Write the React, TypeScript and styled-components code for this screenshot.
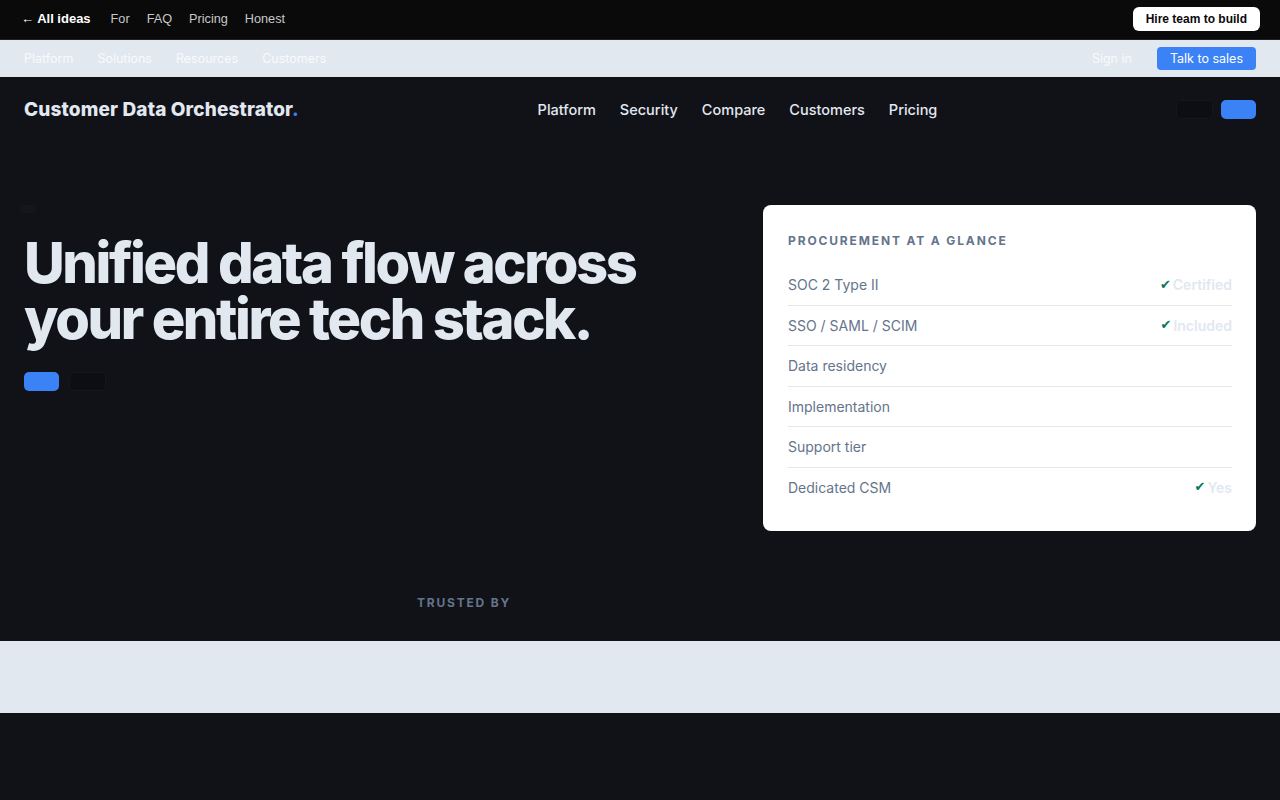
import styled, { createGlobalStyle } from 'styled-components';

const GlobalStyle = createGlobalStyle`
    html, body {
        margin: 0;
        padding: 0;
        background: #111218;
    }
    * {
        box-sizing: border-box;
    }
`;

const procurement = [
    { label: 'SOC 2 Type II', value: 'Certified' },
    { label: 'SSO / SAML / SCIM', value: 'Included' },
    { label: 'Data residency', value: '' },
    { label: 'Implementation', value: '' },
    { label: 'Support tier', value: '' },
    { label: 'Dedicated CSM', value: 'Yes' },
];

const App = () => {
    return (
        <Page>
            <GlobalStyle />
            <TopBar>
                <TopLeft>
                    <BackLink>← All ideas</BackLink>
                    <TopLinks>
                        <span>For</span>
                        <span>FAQ</span>
                        <span>Pricing</span>
                        <span>Honest</span>
                    </TopLinks>
                </TopLeft>
                <HireButton>Hire team to build</HireButton>
            </TopBar>

            <SubBar>
                <SubLinks>
                    <span>Platform</span>
                    <span>Solutions</span>
                    <span>Resources</span>
                    <span>Customers</span>
                </SubLinks>
                <SubRight>
                    <span>Sign in</span>
                    <SalesButton>Talk to sales</SalesButton>
                </SubRight>
            </SubBar>

            <Header>
                <Logo>
                    Customer Data Orchestrator<Dot>.</Dot>
                </Logo>
                <Nav>
                    <a>Platform</a>
                    <a>Security</a>
                    <a>Compare</a>
                    <a>Customers</a>
                    <a>Pricing</a>
                </Nav>
                <HeaderActions>
                    <GhostButton />
                    <PrimaryButton />
                </HeaderActions>
            </Header>

            <Hero>
                <HeroLeft>
                    <Badge />
                    <Headline>
                        Unified data flow across your entire tech stack.
                    </Headline>
                    <HeroActions>
                        <PrimaryButton />
                        <GhostButton />
                    </HeroActions>
                </HeroLeft>
                <Card>
                    <CardTitle>Procurement at a glance</CardTitle>
                    {procurement.map((row) => (
                        <Row key={row.label}>
                            <span>{row.label}</span>
                            {row.value && (
                                <Value>
                                    <Check>✔</Check>
                                    {row.value}
                                </Value>
                            )}
                        </Row>
                    ))}
                </Card>
            </Hero>

            <Trusted>
                <Eyebrow>Trusted by</Eyebrow>
            </Trusted>
            <LogoBand />
        </Page>
    );
};
export default App;

const Page = styled.div`
    min-height: 800px;
    background: #111218;
    font-family: Inter, 'Noto Sans', sans-serif;
`;

const TopBar = styled.div`
    height: 40px;
    background: #0a0a0b;
    border-bottom: 1px solid #1c1f26;
    display: flex;
    align-items: center;
    justify-content: space-between;
    padding: 0 20px 1px 21px;
    font-family: 'Liberation Sans', Arial, sans-serif;
    font-size: 13px;
`;

const TopLeft = styled.div`
    display: flex;
    align-items: center;
    gap: 20px;
`;

const BackLink = styled.span`
    color: #ffffff;
    font-weight: 700;
    position: relative;
    top: -1px;
`;

const TopLinks = styled.div`
    display: flex;
    gap: 17px;
    color: #c8c8c8;
    font-size: 12.7px;
`;

const HireButton = styled.button`
    background: #ffffff;
    color: #0a0a0a;
    border: none;
    border-radius: 6px;
    height: 24px;
    padding: 0 13px;
    font-family: 'Liberation Sans', Arial, sans-serif;
    font-size: 12px;
    font-weight: 700;
`;

const SubBar = styled.div`
    height: 37px;
    background: #e2e8f0;
    display: flex;
    align-items: center;
    justify-content: space-between;
    padding: 0 24px;
    font-size: 12.5px;
    color: #f8fafc;
`;

const SubLinks = styled.div`
    display: flex;
    gap: 24px;
`;

const SubRight = styled.div`
    display: flex;
    align-items: center;
    gap: 25px;
`;

const SalesButton = styled.button`
    background: #3b82f6;
    color: #ffffff;
    border: none;
    border-radius: 4px;
    height: 23px;
    padding: 0 13px;
    font-family: Inter, sans-serif;
    font-size: 12.5px;
`;

const Header = styled.header`
    height: 64px;
    display: flex;
    align-items: center;
    justify-content: space-between;
    padding: 0 24px;
`;

const Logo = styled.div`
    font-size: 19px;
    font-weight: 800;
    color: #e2e8f0;
    letter-spacing: 0.15px;
`;

const Dot = styled.span`
    color: #3b82f6;
`;

const Nav = styled.nav`
    display: flex;
    gap: 24px;
    a {
        font-size: 14.5px;
        font-weight: 500;
        color: #e2e8f0;
    }
`;

const HeaderActions = styled.div`
    display: flex;
    gap: 8px;
`;

const PrimaryButton = styled.button`
    width: 35px;
    height: 19px;
    background: #3b82f6;
    border: none;
    border-radius: 5px;
    padding: 0;
`;

const GhostButton = styled.button`
    width: 37px;
    height: 19px;
    background: #0d0e12;
    border: 1px solid #16171d;
    border-radius: 5px;
    padding: 0;
`;

const Hero = styled.section`
    display: grid;
    grid-template-columns: 1fr 493px;
    gap: 48px;
    padding: 64px 24px 64px 24px;
`;

const HeroLeft = styled.div`
    display: flex;
    flex-direction: column;
    align-items: flex-start;
`;

const Badge = styled.div`
    width: 16px;
    height: 8px;
    margin-left: -4px;
    background: #15161c;
    border-radius: 4px;
    margin-bottom: 22px;
`;

const Headline = styled.h1`
    margin: 0;
    font-size: 56px;
    font-weight: 800;
    line-height: 1;
    letter-spacing: -0.043em;
    color: #e2e8f0;
    max-width: 640px;
`;

const HeroActions = styled.div`
    display: flex;
    gap: 10px;
    margin-top: 25px;
`;

const Card = styled.div`
    background: #ffffff;
    border-radius: 8px;
    padding: 26px 24px 24px 25px;
    align-self: start;
`;

const CardTitle = styled.div`
    font-size: 12px;
    font-weight: 700;
    letter-spacing: 0.155em;
    text-transform: uppercase;
    color: #64748b;
    line-height: 20px;
    margin-bottom: 14.5px;
`;

const Row = styled.div`
    display: flex;
    justify-content: space-between;
    align-items: center;
    padding: 0.6rem 0;
    font-size: 14px;
    line-height: 1.45;
    color: #64748b;
    border-bottom: 1px solid #e2e8f0;
    &:last-child {
        border-bottom: none;
    }
`;

const Value = styled.span`
    display: flex;
    align-items: center;
    gap: 2px;
    font-weight: 600;
    color: #e2e8f0;
`;

const Check = styled.span`
    font-family: 'DejaVu Sans', sans-serif;
    font-size: 13px;
    color: #047857;
`;

const Trusted = styled.section`
    padding: 1px 24px 31px;
`;

const Eyebrow = styled.div`
    width: 880px;
    text-align: center;
    font-size: 12px;
    font-weight: 700;
    letter-spacing: 0.15em;
    text-transform: uppercase;
    line-height: 14px;
    color: #64748b;
`;

const LogoBand = styled.div`
    height: 72px;
    background: #e2e8f0;
`;
